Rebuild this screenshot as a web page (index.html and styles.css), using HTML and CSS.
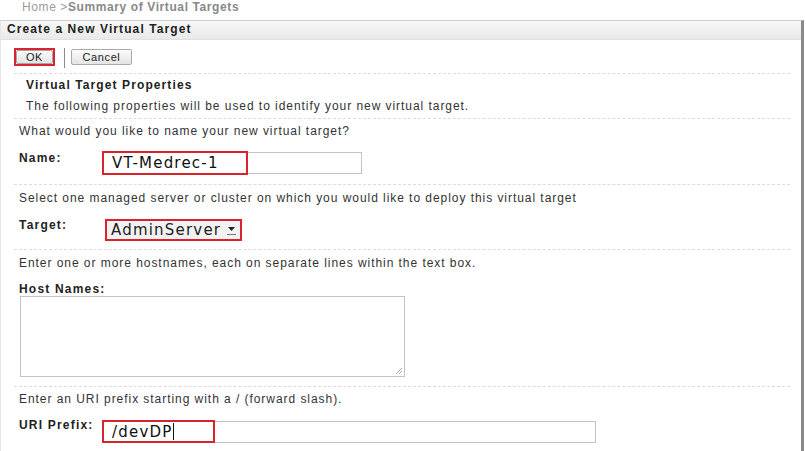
FILE: index.html
```html
<!DOCTYPE html>
<html>
<head>
<meta charset="utf-8">
<link rel="stylesheet" href="styles.css">
</head>
<body>
<div class="crumbs"><span class="home">Home &gt;</span><span class="cur">Summary of Virtual Targets</span></div>
<div class="panel">
  <div class="panel-head">Create a New Virtual Target</div>
  <div class="toolbar">
    <span class="mark-wrap"><button class="btn btn-ok">OK</button><span class="mark mark-ok"></span></span>
    <span class="sep"></span>
    <button class="btn btn-cancel">Cancel</button>
  </div>
  <div class="section intro">
    <div class="title">Virtual Target Properties</div>
    <div class="desc">The following properties will be used to identify your new virtual target.</div>
  </div>
  <div class="section s-name">
    <div class="help">What would you like to name your new virtual target?</div>
    <div class="row">
      <div class="label">Name:</div>
      <div class="field-wrap">
        <div class="input input-name">VT-Medrec-1</div>
        <span class="mark mark-name"></span>
      </div>
    </div>
  </div>
  <div class="section s-target">
    <div class="help">Select one managed server or cluster on which you would like to deploy this virtual target</div>
    <div class="row">
      <div class="label">Target:</div>
      <div class="field-wrap">
        <div class="select">AdminServer<svg class="arrow" width="9" height="10" viewBox="0 0 9 10"><path d="M1 2 L8 2 L4.5 6 Z" fill="#222"/><path d="M0 9.5 H9" stroke="#777" stroke-width="1"/></svg></div>
        <span class="mark mark-target"></span>
      </div>
    </div>
  </div>
  <div class="section s-hosts">
    <div class="help">Enter one or more hostnames, each on separate lines within the text box.</div>
    <div class="label label-block">Host Names:</div>
    <div class="textarea"><svg class="grip" width="9" height="9" viewBox="0 0 9 9"><path d="M8 2 L2 8 M8 5 L5 8" stroke="#aaa" stroke-width="1"/></svg></div>
  </div>
  <div class="section s-uri">
    <div class="help">Enter an URI prefix starting with a / (forward slash).</div>
    <div class="row">
      <div class="label">URI Prefix:</div>
      <div class="field-wrap">
        <div class="input input-uri">/devDP<span class="caret"></span></div>
        <span class="mark mark-uri"></span>
      </div>
    </div>
  </div>
</div>
</body>
</html>
```
FILE: styles.css
```css
html, body {
  margin: 0;
  padding: 0;
  background: #fff;
}
body {
  width: 806px;
  height: 451px;
  overflow: hidden;
  font-family: "Liberation Sans", Arial, sans-serif;
  font-size: 12px;
  letter-spacing: 0.95px;
  color: #333;
}
.crumbs {
  height: 20px;
  line-height: 14px;
  padding-left: 22px;
  font-size: 12px;
  letter-spacing: 0.6px;
  color: #9a9a9a;
}
.crumbs .cur {
  font-weight: bold;
  color: #888;
}
.panel {
  width: 800px;
  border-top: 1px solid #cdcdcd;
  border-right: 3px solid #8a8a8a;
  border-left: 1px solid #e6e6e6;
  height: 440px;
}
.panel-head {
  height: 18px;
  line-height: 16px;
  padding-left: 6px;
  font-weight: bold;
  font-size: 12px;
  letter-spacing: 1.1px;
  color: #222;
  background: linear-gradient(#f7f7f7, #e9e9e9);
  border-bottom: 1px solid #e0e0e0;
}
.toolbar {
  height: 33px;
  display: flex;
  align-items: flex-start;
  padding-left: 13px;
  box-sizing: border-box;
}
.mark-wrap {
  position: relative;
  display: inline-block;
  margin-top: 10px;
  margin-left: 2px;
}
.btn {
  font-family: "Liberation Sans", Arial, sans-serif;
  font-size: 11px;
  letter-spacing: 0.6px;
  color: #222;
  background: linear-gradient(#fbfbfb, #e4e4e4);
  border: 1px solid #a9a9a9;
  border-radius: 2px;
  height: 14px;
  padding: 0;
  line-height: 12px;
  display: block;
}
.btn-ok {
  width: 37px;
}
.btn-cancel {
  width: 61px;
  height: 16px;
  margin-top: 9px;
}
.sep {
  width: 1px;
  height: 20px;
  background: #8c8c8c;
  margin: 8px 6px 0 11px;
}
.mark {
  position: absolute;
  border: 2px solid #d9232d;
  box-sizing: border-box;
  pointer-events: none;
}
.mark-ok {
  left: -2px;
  top: -2px;
  width: 41px;
  height: 18px;
}
.section {
  margin-left: 13px;
  width: 776px;
  border-bottom: 1px dashed #dcdcdc;
  padding-left: 5px;
  box-sizing: border-box;
}
.intro {
  border-top: 1px dashed #dcdcdc;
  padding-left: 12px;
  height: 46px;
}
.intro .title {
  font-weight: bold;
  letter-spacing: 1.1px;
  line-height: 22px;
  color: #222;
}
.intro .desc {
  line-height: 21px;
  color: #333;
}
.help {
  line-height: 20px;
  color: #333;
}
.row {
  display: flex;
  align-items: flex-start;
}
.label {
  width: 83px;
  flex: none;
  font-weight: bold;
  letter-spacing: 1.2px;
  line-height: 13px;
  color: #222;
}
.field-wrap {
  position: relative;
}
.s-name {
  height: 66px;
  padding-top: 2px;
}
.s-name .row {
  margin-top: 11px;
}
.input {
  box-sizing: border-box;
  height: 22px;
  border: 1px solid #c4c4c4;
  background: #fff;
  font-family: "DejaVu Sans", sans-serif;
  font-size: 15px;
  letter-spacing: 1.2px;
  line-height: 20px;
  padding-left: 9px;
  color: #111;
}
.input-name {
  width: 260px;
}
.mark-name {
  left: 0;
  top: -1px;
  width: 146px;
  height: 24px;
}
.s-target {
  height: 65px;
  padding-top: 3px;
}
.s-target .row {
  margin-top: 11px;
}
.select {
  margin-left: 3px;
  box-sizing: border-box;
  height: 22px;
  width: 137px;
  background: #f2f2f2;
  font-family: "DejaVu Sans", sans-serif;
  font-size: 15px;
  letter-spacing: 1.2px;
  line-height: 22px;
  padding-left: 6px;
  color: #222;
  display: flex;
  align-items: center;
}
.arrow {
  margin-left: 6px;
}
.mark-target {
  left: 3px;
  top: 0;
  width: 137px;
  height: 22px;
}
.s-hosts {
  height: 137px;
  padding-top: 3px;
}
.label-block {
  width: auto;
  margin-top: 9px;
  line-height: 14px;
}
.textarea {
  position: relative;
  margin-left: 1px;
  width: 385px;
  height: 81px;
  box-sizing: border-box;
  border: 1px solid #c4c4c4;
  background: #fff;
}
.grip {
  position: absolute;
  right: 1px;
  bottom: 1px;
}
.s-uri {
  height: 66px;
  padding-top: 2px;
}
.s-uri .row {
  margin-top: 11px;
}
.s-uri .label {
  margin-top: -1px;
}
.input-uri {
  width: 494px;
  margin-top: 1px;
}
.caret {
  display: inline-block;
  width: 1px;
  height: 17px;
  background: #111;
  vertical-align: -3px;
  margin-left: 1px;
}
.mark-uri {
  left: 0;
  top: 0;
  width: 113px;
  height: 23px;
}
```
